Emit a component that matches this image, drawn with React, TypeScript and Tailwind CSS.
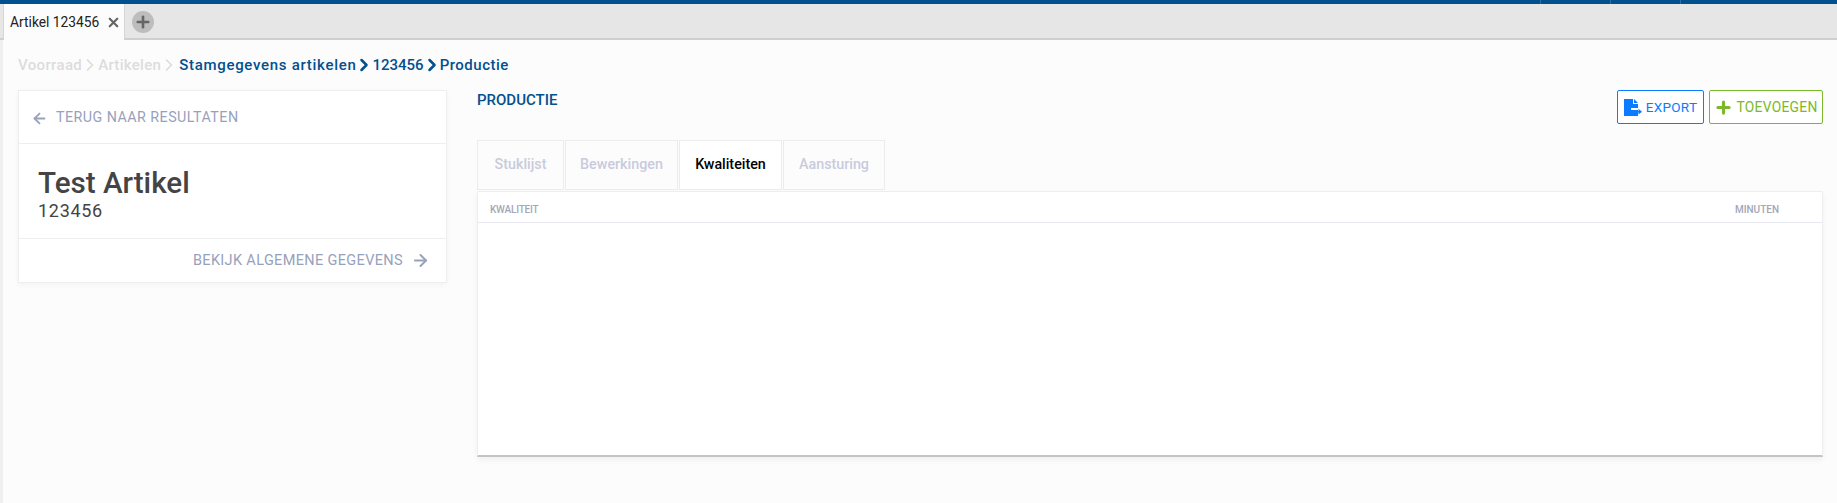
import { ArrowLeft, ArrowRight, ChevronRight, Plus, X } from "lucide-react";

const font = "font-['Roboto',sans-serif]";

function Crumb({ label, faded, className }: { label: string; faded?: boolean; className?: string }) {
    return (
        <span className={`${faded ? "text-[#dcdcdc]" : "text-[#03508f]"} ${className ?? ""}`}>{label}</span>
    );
}

function Sep({ faded }: { faded?: boolean }) {
    return (
        <ChevronRight
            size={20}
            strokeWidth={faded ? 2 : 3}
            className={faded ? "mx-[-2px] text-[#dcdcdc]" : "mx-[-2px] text-[#03508f]"}
        />
    );
}

function Tab({ label, width, active }: { label: string; width: string; active?: boolean }) {
    return (
        <div
            className={`flex h-[50px] items-center justify-center border border-[#ececec] text-[14.300px] font-medium ${width} ${
                active ? "bg-white text-black" : "text-[#c9cbdc]"
            }`}
        >
            {label}
        </div>
    );
}

function ExportIcon() {
    return (
        <svg width="18" height="17" viewBox="0 0 18 17" className="text-[#0a7cff]">
            <path
                fill="currentColor"
                d="M0 0h9v5h5v4H7v2h7v6H0zM10 0l4 4h-4zM8 12h6.500V9.800l3.500 2.900-3.500 2.900v-2.200H8z"
            />
        </svg>
    );
}

export default function App() {
    return (
        <div className={`${font} flex h-[503px] w-[1837px] flex-col overflow-hidden bg-[#fcfcfc]`}>
            <div className="flex h-1 justify-end bg-[#03508f] pr-[156px]">
                <div className="w-[70px] border-r border-[#2f6ea3]" />
                <div className="w-[70px] border-r border-[#2f6ea3]" />
                <div className="w-[70px] border-r border-[#2f6ea3]" />
            </div>
            <div className="flex h-[36px] items-stretch border-b-2 border-[#cfcfcf] bg-[#e6e6e6] pl-[3px]">
                <div className="mb-[-2px] flex w-[122px] items-center gap-[7px] border-r border-l border-[#d6d6d6] bg-[#fcfcfc] pl-[6px] text-[13.800px] text-[#222]">
                    <span className="whitespace-nowrap">Artikel 123456</span>
                    <X size={15} strokeWidth={3.5} className="shrink-0 text-[#666]" />
                </div>
                <div className="ml-[7px] mt-[7px] flex h-[22px] w-[22px] items-center justify-center rounded-full bg-[#bdbdbd]">
                    <Plus size={18} strokeWidth={3.5} className="text-[#666]" />
                </div>
            </div>

            <div className="flex flex-1">
                <div className="w-[3px] bg-[#efefef]" />
                <div className="flex-1 pl-[15px] pr-[14px]">
                    <div className="mt-[10px] flex h-[30px] items-center text-[15px] font-medium">
                        <Crumb label="Voorraad" faded className="tracking-[0.35px]" />
                        <Sep faded />
                        <Crumb label="Artikelen" faded className="tracking-[0.3px]" />
                        <Sep faded />
                        <Crumb label="Stamgegevens artikelen" className="ml-[2px] tracking-[0.7px]" />
                        <Sep />
                        <Crumb label="123456" />
                        <Sep />
                        <Crumb label="Productie" className="tracking-[0.5px]" />
                    </div>

                    <div className="mt-[10px] flex items-start">
                        <div className="w-[429px] border border-[#eeeeee] bg-white shadow-[0_2px_6px_rgba(0,0,0,0.04)]">
                            <div className="flex h-[53px] items-center gap-[8px] border-b border-[#eeeeee] pl-[12px] pt-[2px] text-[14.300px] tracking-[0.45px] text-[#98a1bb]">
                                <ArrowLeft size={17} strokeWidth={2.5} className="text-[#98a2ba]" />
                                TERUG NAAR RESULTATEN
                            </div>
                            <div className="flex h-[95px] flex-col border-b border-[#eeeeee] pl-[19px] pt-[23px]">
                                <div className="text-[29.600px] leading-[33px] font-medium text-[#444]">Test Artikel</div>
                                <div className="mt-px text-[18px] leading-[20px] tracking-[0.7px] text-[#444]">123456</div>
                            </div>
                            <div className="flex h-[43px] items-center justify-end gap-[8px] pr-[16px] text-[14.500px] tracking-[0.35px] text-[#98a1bb]">
                                BEKIJK ALGEMENE GEGEVENS
                                <ArrowRight size={19} strokeWidth={2.5} className="text-[#98a2ba]" />
                            </div>
                        </div>

                        <div className="ml-[30px] flex-1">
                            <div className="flex h-[50px] items-start justify-between">
                                <div className="pt-[1px] text-[15px] leading-[18px] font-medium text-[#03508f]">PRODUCTIE</div>
                                <div className="flex gap-[5px]">
                                    <div className="flex h-[34px] w-[87px] items-center justify-center gap-[4px] rounded-[2px] border border-[#0a7cff] bg-white text-[13.500px] tracking-[0.3px] text-[#0a7cff]">
                                        <ExportIcon />
                                        EXPORT
                                    </div>
                                    <div className="flex h-[34px] w-[114px] items-center justify-center gap-[3px] rounded-[2px] border border-[#7ab929] bg-white text-[13.800px] tracking-[0.3px] text-[#7ab929]">
                                        <Plus size={19} strokeWidth={4} />
                                        TOEVOEGEN
                                    </div>
                                </div>
                            </div>

                            <div className="flex gap-px">
                                <Tab label="Stuklijst" width="w-[87px]" />
                                <Tab label="Bewerkingen" width="w-[113px]" />
                                <Tab label="Kwaliteiten" width="w-[103px]" active />
                                <Tab label="Aansturing" width="w-[102px]" />
                            </div>
                            <div className="mt-px h-[266px] rounded-t-[2px] border border-b-2 border-[#eeeeee] border-b-[#c4c4c4] bg-white shadow-[0_3px_6px_rgba(0,0,0,0.05)]">
                                <div className="flex h-[31px] items-center justify-between border-b border-[#e8e8f0] pl-[12px] pr-[43px] pt-[4px] text-[10px] font-medium text-[#a3a7b8]">
                                    <span className="tracking-[-0.2px]">KWALITEIT</span>
                                    <span>MINUTEN</span>
                                </div>
                            </div>
                        </div>
                    </div>
                </div>
            </div>
        </div>
    );
}
